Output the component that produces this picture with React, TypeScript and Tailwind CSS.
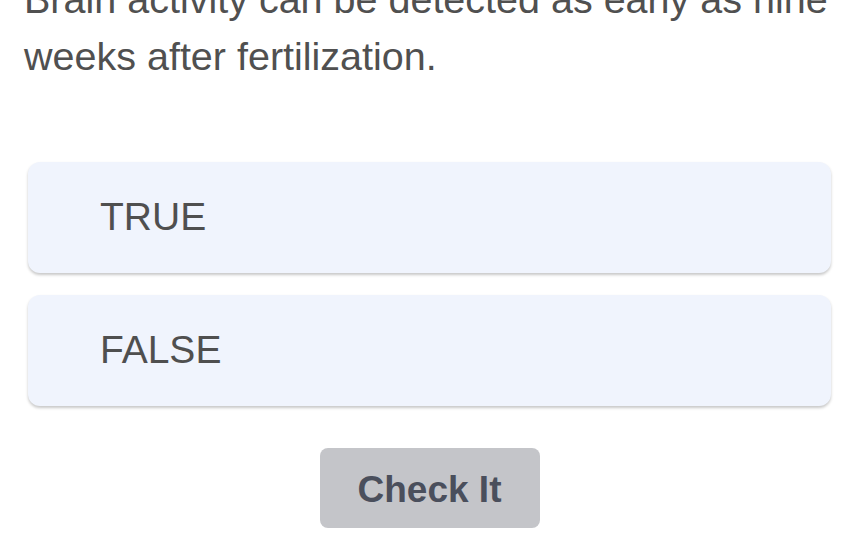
export default function App() {
  return (
    <div className="w-[859px] h-[542px] overflow-hidden bg-white" style={{ fontFamily: '"Liberation Sans", Arial, sans-serif' }}>
      <p className="-mt-[29px] pl-[24px] pr-[20px] text-[39.5px] leading-[57px] text-[#505050]">
        Brain activity can be detected as early as nine weeks after fertilization.
      </p>
      <div className="mt-[77px] mx-[28px] flex flex-col gap-[22px]">
        <div className="h-[111px] rounded-[12px] bg-[#f0f4fd] shadow-[0_2px_3px_rgba(0,0,0,0.22)] flex items-center pl-[72px] text-[39px] text-[#4f4f4f]">
          TRUE
        </div>
        <div className="h-[111px] rounded-[12px] bg-[#f0f4fd] shadow-[0_2px_3px_rgba(0,0,0,0.22)] flex items-center pl-[72px] text-[39px] text-[#4f4f4f]">
          FALSE
        </div>
      </div>
      <div className="mt-[42px] flex justify-center">
        <button className="w-[220px] h-[80px] rounded-[8px] bg-[#c4c5c9] text-[#4a4f5c] font-bold text-[37px] pt-[4px]">
          Check It
        </button>
      </div>
    </div>
  );
}
